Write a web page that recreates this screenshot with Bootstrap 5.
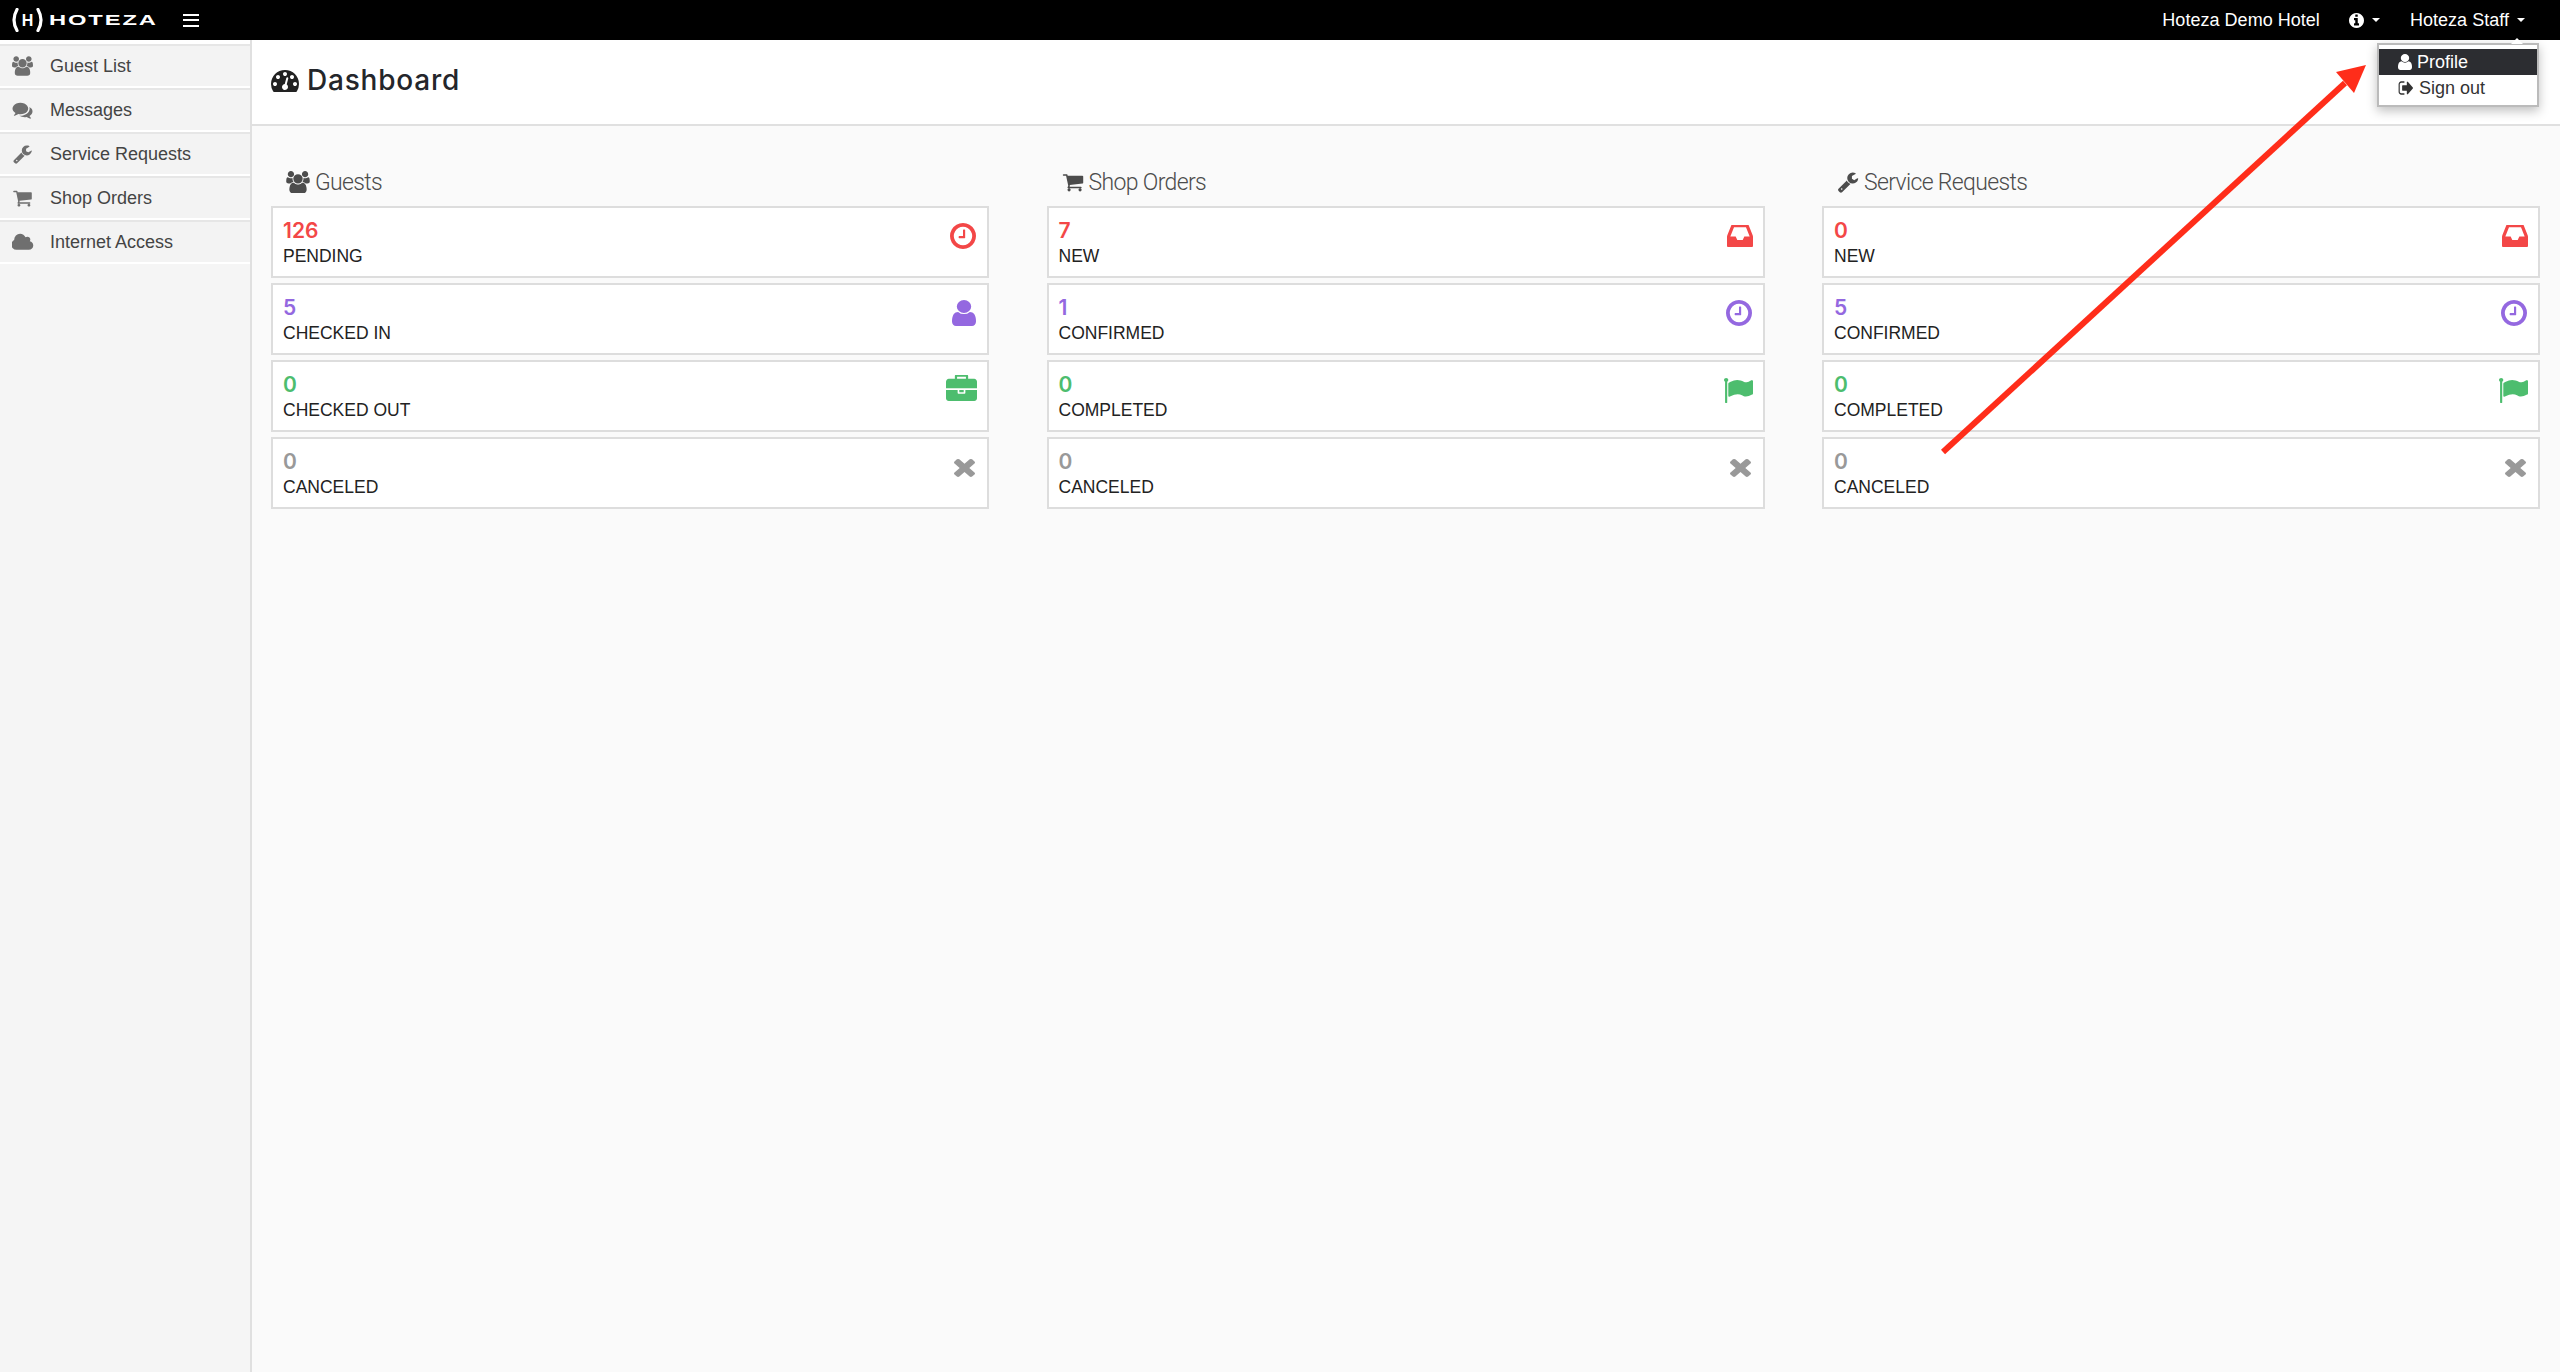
<!DOCTYPE html>
<html lang="en">
<head>
<meta charset="utf-8">
<title>Hoteza Dashboard</title>
<link href="https://cdn.jsdelivr.net/npm/bootstrap@5.3.0/dist/css/bootstrap.min.css" rel="stylesheet">
<style>
html,body{height:100%}
body{font-family:"Liberation Sans",Arial,sans-serif;font-size:18px;color:#222;background:#fafafa;overflow:hidden}
.ico{fill:currentColor;display:block;flex:none}
.topbar{height:40px;background:#000;color:#fff;padding:0 35px 0 11px}
.logo-mark{width:33px;height:24px;flex:none}
.logo-mark text{font:700 16px "Liberation Sans",sans-serif;fill:#fff}
.logo-word{font:700 15px/40px "Liberation Sans",sans-serif;letter-spacing:1.2px;transform:scaleX(1.58);transform-origin:left center;width:107px;margin-left:5px;white-space:nowrap}
.burger{margin-left:27px;width:16px;height:13px;border-top:2.5px solid #fff;border-bottom:2.5px solid #fff}
.burger::after{content:"";display:block;height:2.5px;background:#fff;margin-top:3px}
.top-text{font-size:18px;line-height:40px;white-space:nowrap;letter-spacing:.03px}
.tcaret{width:0;height:0;border-left:4px solid transparent;border-right:4px solid transparent;border-top:4px solid #fff;margin-left:8px}
.info-ic{margin-left:29px}
.staff-name{margin-left:30px}
.shell{height:calc(100vh - 40px)}
.side{width:252px;flex:none;background:#f5f5f5;border-right:2px solid #e0e0e0}
.side-list{background:#fff;padding-top:4px}
.side-link{height:44px;background:#f3f3f3;border-top:2px solid #e6e6e6;border-bottom:2px solid #fff;color:#444;text-decoration:none}
.side-icon{width:50px;padding-left:12px;color:#6f6f6f}
.main-area{min-width:0;background:#fafafa}
.head-bar{height:86px;background:#fff;border-bottom:2px solid #e0e0e0;padding:0 0 4px 19px}
.dash-title{font:500 28px/1 Inter,"Noto Sans",sans-serif;letter-spacing:.8px;color:#24262b;margin:0}
.board{padding:0 20px 0 19px}
.board-row{--bs-gutter-x:57.5px;--bs-gutter-y:0}
.sec-title{height:80px;padding:41px 0 0 15px;font:300 23px/32px Roboto,sans-serif;letter-spacing:-.65px;color:#4c4c4c;margin:0}
.sec-ic{margin-top:4px;margin-right:5px}
.stat{height:72px;margin-bottom:5px;background:#fff;border:2px solid #ddd;padding:0 10px 0 10px}
.stat-num{font:600 21px/24px Inter,sans-serif;padding-top:11px}
.stat-lab{font-size:17.5px;line-height:22px;color:#222;padding-top:2px}
.c-red{color:#f34747}.c-pur{color:#9468e0}.c-grn{color:#4dbd6e}.c-gry{color:#999}
.pt-15{padding-top:15px}.pt-13{padding-top:13px}.pt-19{padding-top:18px}.pt-17{padding-top:17px}.pt-16{padding-top:16px}
.mr-x{margin-right:2px}.mr-c{margin-right:1px}
.drop{position:absolute;left:2377px;top:43px;width:162px;height:64px;background:#fff;border:2px solid #bbb;box-shadow:0 4px 10px rgba(0,0,0,.25);padding-top:4px;z-index:5}
.drop::before{content:"";position:absolute;right:14px;top:-7px;border-left:6px solid transparent;border-right:6px solid transparent;border-bottom:6px solid #fff}
.drop-item{height:26px;line-height:26px;padding-left:19px;font-size:18px;color:#333;text-decoration:none}
.drop-item.on{background:#2c2d31;color:#fff}
.gap-p{margin-right:5px}.gap-o{margin-right:6px}
.arrow-layer{position:absolute;left:0;top:0;z-index:6;pointer-events:none}
</style>
</head>
<body>
<svg width="0" height="0" class="position-absolute">
<defs>
<symbol id="i-users" viewBox="0 0 1920 1792"><path d="M593 896q-162 5-265 128h-134q-82 0-138-40.5t-56-118.5q0-353 124-353 6 0 43.5 21t97.5 42.5 119 21.5q67 0 133-23-5 37-5 66 0 139 81 256zm1071 637q0 120-73 189.5t-194 69.5h-874q-121 0-194-69.5t-73-189.5q0-53 3.5-103.5t14-109 26.5-108.5 43-97.5 62-81 85.5-53.5 111.5-20q10 0 43 21.5t73 48 107 48 135 21.5 135-21.5 107-48 73-48 43-21.5q61 0 111.5 20t85.5 53.5 62 81 43 97.5 26.5 108.5 14 109 3.5 103.5zm-1024-1277q0 106-75 181t-181 75-181-75-75-181 75-181 181-75 181 75 75 181zm704 384q0 159-112.5 271.5t-271.5 112.5-271.5-112.5-112.5-271.5 112.5-271.5 271.5-112.5 271.5 112.5 112.5 271.5zm576 225q0 78-56 118.5t-138 40.5h-134q-103-123-265-128 81-117 81-256 0-29-5-66 66 23 133 23 59 0 119-21.5t97.5-42.5 43.5-21q124 0 124 353zm-128-609q0 106-75 181t-181 75-181-75-75-181 75-181 181-75 181 75 75 181z"/></symbol>
<symbol id="i-comments" viewBox="0 0 1792 1792"><path d="M1408 768q0 139-94 257t-256.5 186.5-353.5 68.5q-86 0-176-16-124 88-278 128-36 9-86 16h-3q-11 0-20.5-8t-11.5-21q-1-3-1-6.5t.5-6.5 2-6l2.5-5 3.5-5.5 4-5 4.5-5 4-4.5q5-6 23-25t26-29.5 22.5-29 25-38.5 20.5-44q-124-72-195-177t-71-224q0-139 94-257t256.5-186.5 353.5-68.5 353.5 68.5 256.5 186.5 94 257zm384 256q0 120-71 224.5t-195 176.5q10 24 20.5 44t25 38.5 22.5 29 26 29.5 23 25q1 1 4 4.5t4.5 5 4 5 3.5 5.5l2.5 5 2 6 .5 6.5-1 6.5q-3 14-13 22t-22 7q-50-7-86-16-154-40-278-128-90 16-176 16-271 0-472-132 58 4 88 4 161 0 309-45t264-129q125-92 192-212t67-254q0-77-23-152 129 71 204 178t75 230z"/></symbol>
<symbol id="i-wrench" viewBox="0 0 1792 1792"><path d="M448 1472q0-26-19-45t-45-19-45 19-19 45 19 45 45 19 45-19 19-45zm644-420l-682 682q-37 37-90 37-52 0-91-37l-106-108q-38-36-38-90 0-53 38-91l681-681q39 98 114.5 173.5t173.5 114.5zm634-435q0 39-23 106-47 134-164.5 217.5t-258.5 83.5q-185 0-316.5-131.5t-131.5-316.5 131.5-316.5 316.5-131.5q58 0 121.5 16.5t107.5 46.5q16 11 16 28t-16 28l-293 169v224l193 107q5-3 79-48.5t135.5-81 70.5-35.5q15 0 23.5 10t8.5 25z"/></symbol>
<symbol id="i-cart" viewBox="0 0 1792 1792"><path d="M704 1536q0 52-38 90t-90 38-90-38-38-90 38-90 90-38 90 38 38 90zm896 0q0 52-38 90t-90 38-90-38-38-90 38-90 90-38 90 38 38 90zm128-1088v512q0 24-16.5 42.5t-40.5 21.5l-1044 122q13 60 13 70 0 16-24 64h920q26 0 45 19t19 45-19 45-45 19h-1024q-26 0-45-19t-19-45q0-11 8-31.5t16-36 21.5-40 15.5-29.5l-177-823h-204q-26 0-45-19t-19-45 19-45 45-19h256q16 0 28.5 6.5t19.5 15.5 13 24.5 8 26 5.5 29.5 4.5 26h1201q26 0 45 19t19 45z"/></symbol>
<symbol id="i-cloud" viewBox="0 0 1920 1792"><path d="M1856 1152q0 159-112.5 271.5t-271.5 112.5h-1088q-185 0-316.5-131.5t-131.5-316.5q0-132 71-241.5t187-163.5q-2-28-2-43 0-212 150-362t362-150q158 0 286.5 88t187.5 230q70-62 166-62 106 0 181 75t75 181q0 75-41 138 129 30 213 134.5t84 239.5z"/></symbol>
<symbol id="i-dash" viewBox="0 0 1792 1792"><path d="M384 1152q0-53-37.5-90.5t-90.5-37.5-90.5 37.5-37.5 90.5 37.5 90.5 90.5 37.5 90.5-37.5 37.5-90.5zm192-448q0-53-37.5-90.5t-90.5-37.5-90.5 37.5-37.5 90.5 37.5 90.5 90.5 37.5 90.5-37.5 37.5-90.5zm428 481l101-382q6-26-7.5-48.5t-38.5-29.5-48 6.5-30 39.5l-101 382q-60 5-107 43.5t-63 98.5q-20 77 20 146t117 89 146-20 89-117q16-60-6-117t-72-91zm660-33q0-53-37.5-90.5t-90.5-37.5-90.5 37.5-37.5 90.5 37.5 90.5 90.5 37.5 90.5-37.5 37.5-90.5zm-640-640q0-53-37.5-90.5t-90.5-37.5-90.5 37.5-37.5 90.5 37.5 90.5 90.5 37.5 90.5-37.5 37.5-90.5zm448 192q0-53-37.5-90.5t-90.5-37.5-90.5 37.5-37.5 90.5 37.5 90.5 90.5 37.5 90.5-37.5 37.5-90.5zm320 448q0 261-141 483-19 29-54 29h-1402q-35 0-54-29-141-221-141-483 0-182 71-348t191-286 286-191 348-71 348 71 286 191 191 286 71 348z"/></symbol>
<symbol id="i-info" viewBox="128 128 1536 1536"><path d="M1152 1376v-160q0-14-9-23t-23-9h-96v-512q0-14-9-23t-23-9h-320q-14 0-23 9t-9 23v160q0 14 9 23t23 9h96v320h-96q-14 0-23 9t-9 23v160q0 14 9 23t23 9h448q14 0 23-9t9-23zm-128-896v-160q0-14-9-23t-23-9h-192q-14 0-23 9t-9 23v160q0 14 9 23t23 9h192q14 0 23-9t9-23zm640 416q0 209-103 385.5t-279.5 279.5-385.5 103-385.5-103-279.5-279.5-103-385.5 103-385.5 279.5-279.5 385.5-103 385.5 103 279.5 279.5 103 385.5z"/></symbol>
<symbol id="i-clock" viewBox="128 128 1536 1536"><path d="M1024 544v448q0 14-9 23t-23 9h-320q-14 0-23-9t-9-23v-64q0-14 9-23t23-9h224v-352q0-14 9-23t23-9h64q14 0 23 9t9 23zm416 352q0-148-73-273t-198-198-273-73-273 73-198 198-73 273 73 273 198 198 273 73 273-73 198-198 73-273zm224 0q0 209-103 385.5t-279.5 279.5-385.5 103-385.5-103-279.5-279.5-103-385.5 103-385.5 279.5-279.5 385.5-103 385.5 103 279.5 279.5 103 385.5z"/></symbol>
<symbol id="i-user" viewBox="256 128 1280 1536" preserveAspectRatio="none"><path d="M1536 1399q0 109-62.5 187t-150.5 78h-854q-88 0-150.5-78t-62.5-187q0-85 8.5-160.5t31.5-152 58.5-131 94-89 134.5-34.5q131 128 313 128t313-128q76 0 134.5 34.5t94 89 58.5 131 31.5 152 8.5 160.5zm-256-887q0 159-112.5 271.5t-271.5 112.5-271.5-112.5-112.5-271.5 112.5-271.5 271.5-112.5 271.5 112.5 112.5 271.5z"/></symbol>
<symbol id="i-case" viewBox="0 32 1792 1504" preserveAspectRatio="none"><path d="M640 256h512v-128h-512v128zm1152 640v480q0 66-47 113t-113 47h-1472q-66 0-113-47t-47-113v-480h672v160q0 26 19 45t45 19h320q26 0 45-19t19-45v-160h672zm-768 0v128h-256v-128h256zm768-480v384h-1792v-384q0-66 47-113t113-47h352v-160q0-40 28-68t68-28h576q40 0 68 28t28 68v160h352q66 0 113 47t47 113z"/></symbol>
<symbol id="i-x" viewBox="302 238 1188 1316" preserveAspectRatio="none"><path d="M1490 1322q0 40-28 68l-136 136q-28 28-68 28t-68-28l-294-294-294 294q-28 28-68 28t-68-28l-136-136q-28-28-28-68t28-68l294-294-294-294q-28-28-28-68t28-68l136-136q28-28 68-28t68 28l294 294 294-294q28-28 68-28t68 28l136 136q28 28 28 68t-28 68l-294 294 294 294q28 28 28 68z"/></symbol>
<symbol id="i-inbox" viewBox="0 320 1536 1216" preserveAspectRatio="none"><path d="M1023 960h316q-1-3-2.5-8.5t-2.5-7.5l-212-496h-708l-212 496q-1 3-2.5 8.5t-2.5 7.5h316l95 192h320zm513 30v482q0 26-19 45t-45 19h-1408q-26 0-45-19t-19-45v-482q0-62 25-123l238-552q10-25 36.5-42t52.5-17h832q26 0 52.5 17t36.5 42l238 552q25 61 25 123z"/></symbol>
<symbol id="i-flag" viewBox="64 128 1728 1536" preserveAspectRatio="none"><path d="M320 256q0 72-64 110v1266q0 13-9.5 22.5t-22.5 9.5h-64q-13 0-22.5-9.5t-9.5-22.5v-1266q-64-38-64-110 0-53 37.5-90.5t90.5-37.5 90.5 37.5 37.5 90.5zm1472 64v763q0 25-12.5 38.5t-39.5 27.5q-215 116-369 116-61 0-123.5-22t-108.5-48-115.5-48-142.5-22q-192 0-464 146-17 9-33 9-26 0-45-19t-19-45v-742q0-32 31-55 21-14 79-43 236-120 421-120 107 0 200 29t219 88q38 19 88 19 54 0 117.5-21t110-47 88-47 54.5-21q26 0 45 19t19 45z"/></symbol>
<symbol id="i-out" viewBox="0 224 1632 1344" preserveAspectRatio="none"><path d="M704 1440q0 4 1 20t.5 26.5-3 23.5-10 19.5-20.5 6.5h-320q-119 0-203.5-84.5t-84.5-203.5v-704q0-119 84.5-203.5t203.5-84.5h320q13 0 22.5 9.5t9.5 22.5q0 4 1 20t.5 26.5-3 23.5-10 19.5-20.5 6.5h-320q-66 0-113 47t-47 113v704q0 66 47 113t113 47h312l11.5 1 11.5 3 8 5.5 7 9 2 13.5zm928-544q0 26-19 45l-544 544q-19 19-45 19t-45-19-19-45v-288h-448q-26 0-45-19t-19-45v-384q0-26 19-45t45-19h448v-288q0-26 19-45t45-19 45 19l544 544q19 19 19 45z"/></symbol>
</defs>
</svg>

<nav class="topbar d-flex align-items-center">
  <svg class="logo-mark" viewBox="0 0 33 24">
    <path d="M6 1.5Q0 12 6 22.5" fill="none" stroke="#fff" stroke-width="3.2" stroke-linecap="round"/>
    <path d="M27 1.5Q33 12 27 22.5" fill="none" stroke="#fff" stroke-width="3.2" stroke-linecap="round"/>
    <text x="16.5" y="17.5" text-anchor="middle">H</text>
  </svg>
  <span class="logo-word">HOTEZA</span>
  <span class="burger"></span>
  <div class="ms-auto d-flex align-items-center">
    <span class="top-text">Hoteza Demo Hotel</span>
    <svg class="ico info-ic" width="15" height="15"><use href="#i-info"/></svg>
    <span class="tcaret"></span>
    <span class="top-text staff-name">Hoteza Staff</span>
    <span class="tcaret"></span>
  </div>
</nav>

<div class="shell d-flex">
  <aside class="side">
    <div class="side-list">
      <a class="side-link d-flex align-items-center" href="#"><span class="side-icon"><svg class="ico" width="21" height="20"><use href="#i-users"/></svg></span>Guest List</a>
      <a class="side-link d-flex align-items-center" href="#"><span class="side-icon"><svg class="ico" width="21" height="20"><use href="#i-comments"/></svg></span>Messages</a>
      <a class="side-link d-flex align-items-center" href="#"><span class="side-icon"><svg class="ico" width="21" height="20"><use href="#i-wrench"/></svg></span>Service Requests</a>
      <a class="side-link d-flex align-items-center" href="#"><span class="side-icon"><svg class="ico" width="21" height="20"><use href="#i-cart"/></svg></span>Shop Orders</a>
      <a class="side-link d-flex align-items-center" href="#"><span class="side-icon"><svg class="ico" width="22" height="21"><use href="#i-cloud"/></svg></span>Internet Access</a>
    </div>
  </aside>

  <main class="main-area flex-grow-1">
    <header class="head-bar d-flex align-items-center">
      <svg class="ico me-2" width="28" height="28"><use href="#i-dash"/></svg>
      <h1 class="dash-title">Dashboard</h1>
    </header>
    <div class="board">
      <div class="row board-row">
        <section class="col-4">
          <h2 class="sec-title d-flex align-items-start"><svg class="ico sec-ic" width="24" height="22"><use href="#i-users"/></svg>Guests</h2>
          <div class="stat d-flex justify-content-between"><div><div class="stat-num c-red">126</div><div class="stat-lab">PENDING</div></div><div class="pt-15 c-red mr-c"><svg class="ico" width="26" height="26"><use href="#i-clock"/></svg></div></div>
          <div class="stat d-flex justify-content-between"><div><div class="stat-num c-pur">5</div><div class="stat-lab">CHECKED IN</div></div><div class="pt-15 c-pur mr-c"><svg class="ico" width="24" height="26"><use href="#i-user"/></svg></div></div>
          <div class="stat d-flex justify-content-between"><div><div class="stat-num c-grn">0</div><div class="stat-lab">CHECKED OUT</div></div><div class="pt-13 c-grn"><svg class="ico" width="31" height="26"><use href="#i-case"/></svg></div></div>
          <div class="stat d-flex justify-content-between"><div><div class="stat-num c-gry">0</div><div class="stat-lab">CANCELED</div></div><div class="pt-19 c-gry mr-x"><svg class="ico" width="21" height="20"><use href="#i-x"/></svg></div></div>
        </section>
        <section class="col-4">
          <h2 class="sec-title d-flex align-items-start"><svg class="ico sec-ic" width="22" height="22"><use href="#i-cart"/></svg>Shop Orders</h2>
          <div class="stat d-flex justify-content-between"><div><div class="stat-num c-red">7</div><div class="stat-lab">NEW</div></div><div class="pt-17 c-red"><svg class="ico" width="26" height="22"><use href="#i-inbox"/></svg></div></div>
          <div class="stat d-flex justify-content-between"><div><div class="stat-num c-pur">1</div><div class="stat-lab">CONFIRMED</div></div><div class="pt-15 c-pur mr-c"><svg class="ico" width="26" height="26"><use href="#i-clock"/></svg></div></div>
          <div class="stat d-flex justify-content-between"><div><div class="stat-num c-grn">0</div><div class="stat-lab">COMPLETED</div></div><div class="pt-16 c-grn"><svg class="ico" width="29" height="25"><use href="#i-flag"/></svg></div></div>
          <div class="stat d-flex justify-content-between"><div><div class="stat-num c-gry">0</div><div class="stat-lab">CANCELED</div></div><div class="pt-19 c-gry mr-x"><svg class="ico" width="21" height="20"><use href="#i-x"/></svg></div></div>
        </section>
        <section class="col-4">
          <h2 class="sec-title d-flex align-items-start"><svg class="ico sec-ic" width="22" height="22"><use href="#i-wrench"/></svg>Service Requests</h2>
          <div class="stat d-flex justify-content-between"><div><div class="stat-num c-red">0</div><div class="stat-lab">NEW</div></div><div class="pt-17 c-red"><svg class="ico" width="26" height="22"><use href="#i-inbox"/></svg></div></div>
          <div class="stat d-flex justify-content-between"><div><div class="stat-num c-pur">5</div><div class="stat-lab">CONFIRMED</div></div><div class="pt-15 c-pur mr-c"><svg class="ico" width="26" height="26"><use href="#i-clock"/></svg></div></div>
          <div class="stat d-flex justify-content-between"><div><div class="stat-num c-grn">0</div><div class="stat-lab">COMPLETED</div></div><div class="pt-16 c-grn"><svg class="ico" width="29" height="25"><use href="#i-flag"/></svg></div></div>
          <div class="stat d-flex justify-content-between"><div><div class="stat-num c-gry">0</div><div class="stat-lab">CANCELED</div></div><div class="pt-19 c-gry mr-x"><svg class="ico" width="21" height="20"><use href="#i-x"/></svg></div></div>
        </section>
      </div>
    </div>
  </main>
</div>

<div class="drop">
  <a class="drop-item on d-flex align-items-center" href="#"><svg class="ico gap-p" width="14" height="16"><use href="#i-user"/></svg>Profile</a>
  <a class="drop-item d-flex align-items-center" href="#"><svg class="ico gap-o" width="15" height="14"><use href="#i-out"/></svg>Sign out</a>
</div>

<svg class="arrow-layer" width="2560" height="1372">
  <line x1="1943" y1="452" x2="2345" y2="83" stroke="#ff2d1a" stroke-width="6"/>
  <polygon points="2366,65 2354,93 2336,72" fill="#ff2d1a"/>
</svg>
</body>
</html>
